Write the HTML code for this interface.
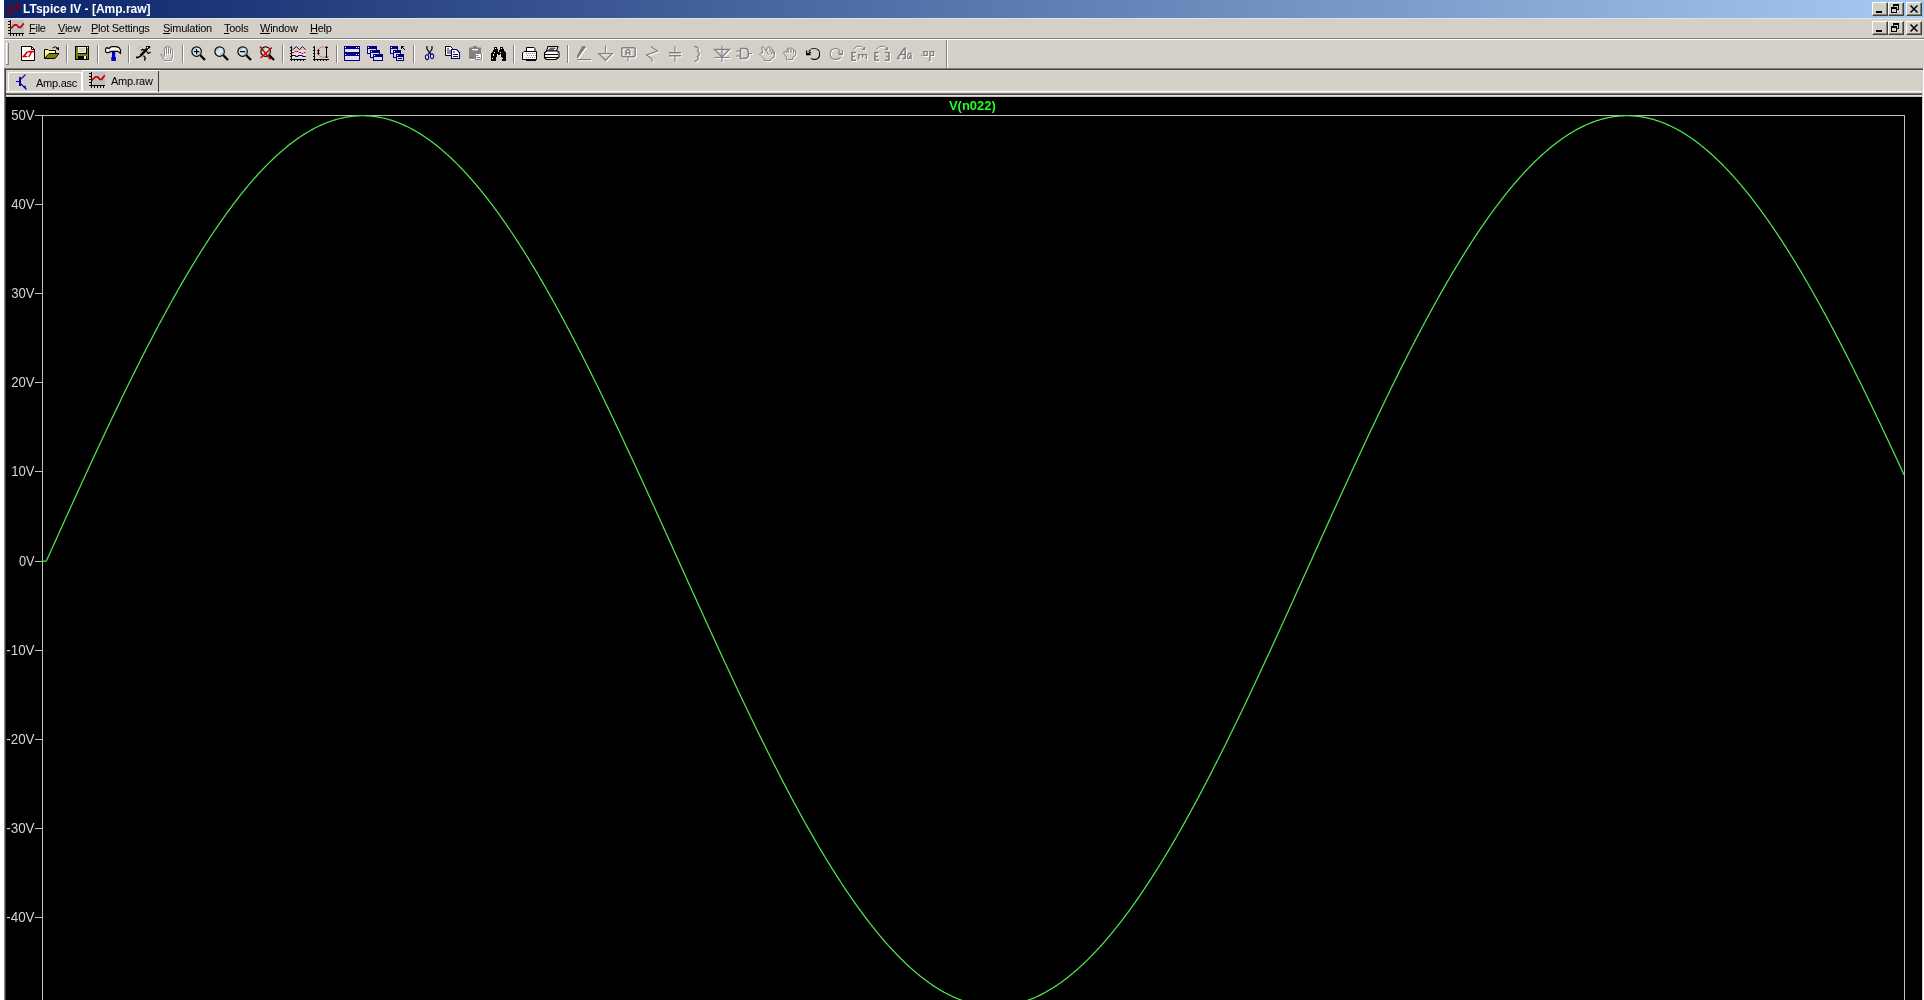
<!DOCTYPE html><html><head><meta charset="utf-8"><style>
*{margin:0;padding:0;box-sizing:border-box}
html,body{width:1924px;height:1000px;overflow:hidden;background:#fff;position:relative;font-family:"Liberation Sans",sans-serif}
.t,.tt{will-change:transform}
.a{position:absolute}
.t{position:absolute;font-size:11px;line-height:12px;color:#000;white-space:nowrap;letter-spacing:-0.25px}
.u{text-decoration:underline;text-underline-offset:1px}
svg{position:absolute;overflow:visible}
</style></head><body><div class="a" style="left:4px;top:0px;width:1920px;height:18px;background:linear-gradient(to right,#0a246a,#a6caf0);"></div><div class="a" style="left:4px;top:18px;width:1920px;height:20px;background:#d4d0c8;"></div><div class="a" style="left:4px;top:18px;width:1920px;height:1px;background:#e2e1e2;"></div><div class="a" style="left:4px;top:38px;width:1920px;height:1px;background:#808080;"></div><div class="a" style="left:4px;top:39px;width:1920px;height:1px;background:#ffffff;"></div><div class="a" style="left:4px;top:40px;width:1920px;height:28px;background:#d4d0c8;"></div><div class="a" style="left:946px;top:40px;width:1px;height:28px;background:#808080;"></div><div class="a" style="left:947px;top:40px;width:1px;height:28px;background:#ffffff;"></div><div class="a" style="left:4px;top:68px;width:1920px;height:932px;background:#d4d0c8;"></div><div class="a" style="left:4px;top:68px;width:1920px;height:1px;background:#808080;"></div><div class="a" style="left:4px;top:69px;width:1919px;height:1px;background:#404040;"></div><div class="a" style="left:4px;top:68px;width:1px;height:932px;background:#808080;"></div><div class="a" style="left:6px;top:70px;width:1916px;height:1px;background:#dedad4;"></div><div class="a" style="left:5px;top:69px;width:1px;height:931px;background:#404040;"></div><div class="a" style="left:1923px;top:68px;width:1px;height:932px;background:#ffffff;"></div><div class="a" style="left:6px;top:91px;width:1916px;height:1px;background:#ffffff;"></div><div class="a" style="left:6px;top:92px;width:1916px;height:1px;background:#d4d0c8;"></div><div class="a" style="left:6px;top:93px;width:1916px;height:1px;background:#808080;"></div><div class="a" style="left:6px;top:94px;width:1916px;height:1px;background:#404040;"></div><div class="a" style="left:6px;top:95px;width:1916px;height:1px;background:#e8e6e2;"></div><div class="a" style="left:6px;top:96px;width:1916px;height:1px;background:#c8c6c2;"></div><div class="a" style="left:6px;top:97px;width:1916px;height:903px;background:#000000;"></div><div class="a" style="will-change:transform;left:23px;top:2px;font-weight:bold;font-size:12px;line-height:14px;color:#fff;white-space:nowrap">LTspice IV - [Amp.raw]</div><div class="a" style="left:1872px;top:2px;width:16px;height:14px;background:#d4d0c8;border-top:1px solid #fff;border-left:1px solid #fff;border-right:1px solid #404040;border-bottom:1px solid #404040;box-shadow:inset -1px -1px 0 #808080"></div><div class="a" style="left:1876px;top:11px;width:6px;height:2px;background:#000;"></div><div class="a" style="left:1888px;top:2px;width:16px;height:14px;background:#d4d0c8;border-top:1px solid #fff;border-left:1px solid #fff;border-right:1px solid #404040;border-bottom:1px solid #404040;box-shadow:inset -1px -1px 0 #808080"></div><svg class="a" style="left:1888px;top:2px" width="16" height="14" shape-rendering="crispEdges"><path d="M5 2h6v6h-2v-1h1v-3h-4v1h-1z" fill="#000"/><path d="M3 5h6v6h-6z M4 7v3h4v-3z" fill="#000" fill-rule="evenodd"/></svg><div class="a" style="left:1906px;top:2px;width:16px;height:14px;background:#d4d0c8;border-top:1px solid #fff;border-left:1px solid #fff;border-right:1px solid #404040;border-bottom:1px solid #404040;box-shadow:inset -1px -1px 0 #808080"></div><svg class="a" style="left:1906px;top:2px" width="16" height="14"><path d="M4.5 3.5 L11.5 10.5 M11.5 3.5 L4.5 10.5" stroke="#000" stroke-width="1.5" fill="none"/></svg><div class="a" style="left:1872px;top:21px;width:16px;height:14px;background:#d4d0c8;border-top:1px solid #fff;border-left:1px solid #fff;border-right:1px solid #404040;border-bottom:1px solid #404040;box-shadow:inset -1px -1px 0 #808080"></div><div class="a" style="left:1876px;top:30px;width:6px;height:2px;background:#000;"></div><div class="a" style="left:1888px;top:21px;width:16px;height:14px;background:#d4d0c8;border-top:1px solid #fff;border-left:1px solid #fff;border-right:1px solid #404040;border-bottom:1px solid #404040;box-shadow:inset -1px -1px 0 #808080"></div><svg class="a" style="left:1888px;top:21px" width="16" height="14" shape-rendering="crispEdges"><path d="M5 2h6v6h-2v-1h1v-3h-4v1h-1z" fill="#000"/><path d="M3 5h6v6h-6z M4 7v3h4v-3z" fill="#000" fill-rule="evenodd"/></svg><div class="a" style="left:1906px;top:21px;width:16px;height:14px;background:#d4d0c8;border-top:1px solid #fff;border-left:1px solid #fff;border-right:1px solid #404040;border-bottom:1px solid #404040;box-shadow:inset -1px -1px 0 #808080"></div><svg class="a" style="left:1906px;top:21px" width="16" height="14"><path d="M4.5 3.5 L11.5 10.5 M11.5 3.5 L4.5 10.5" stroke="#000" stroke-width="1.5" fill="none"/></svg><div class="t" style="left:29px;top:22px"><span class="u">F</span>ile</div><div class="t" style="left:57.5px;top:22px"><span class="u">V</span>iew</div><div class="t" style="left:91px;top:22px"><span class="u">P</span>lot Settings</div><div class="t" style="left:163px;top:22px"><span class="u">S</span>imulation</div><div class="t" style="left:223.5px;top:22px"><span class="u">T</span>ools</div><div class="t" style="left:260px;top:22px"><span class="u">W</span>indow</div><div class="t" style="left:310px;top:22px"><span class="u">H</span>elp</div><div class="a" style="left:8px;top:72px;width:74px;height:19px;background:#d4d0c8;border-top:1px solid #fff;border-left:1px solid #fff;border-top-left-radius:2px"></div><div class="a" style="left:81px;top:73px;width:1px;height:18px;background:#ffffff;"></div><div class="t" style="left:36px;top:77px">Amp.asc</div><div class="a" style="left:82px;top:70px;width:78px;height:21px;background:#d4d0c8;border-top:1px solid #fff;border-left:1px solid #fff;border-top-left-radius:2px"></div><div class="a" style="left:158px;top:71px;width:1px;height:21px;background:#404040;"></div><div class="t" style="left:111px;top:75px">Amp.raw</div><div class="a" style="left:66px;top:45px;width:1px;height:18px;background:#808080;"></div><div class="a" style="left:67px;top:45px;width:1px;height:18px;background:#ffffff;"></div><div class="a" style="left:97px;top:45px;width:1px;height:18px;background:#808080;"></div><div class="a" style="left:98px;top:45px;width:1px;height:18px;background:#ffffff;"></div><div class="a" style="left:128px;top:45px;width:1px;height:18px;background:#808080;"></div><div class="a" style="left:129px;top:45px;width:1px;height:18px;background:#ffffff;"></div><div class="a" style="left:182px;top:45px;width:1px;height:18px;background:#808080;"></div><div class="a" style="left:183px;top:45px;width:1px;height:18px;background:#ffffff;"></div><div class="a" style="left:282px;top:45px;width:1px;height:18px;background:#808080;"></div><div class="a" style="left:283px;top:45px;width:1px;height:18px;background:#ffffff;"></div><div class="a" style="left:336px;top:45px;width:1px;height:18px;background:#808080;"></div><div class="a" style="left:337px;top:45px;width:1px;height:18px;background:#ffffff;"></div><div class="a" style="left:413px;top:45px;width:1px;height:18px;background:#808080;"></div><div class="a" style="left:414px;top:45px;width:1px;height:18px;background:#ffffff;"></div><div class="a" style="left:513px;top:45px;width:1px;height:18px;background:#808080;"></div><div class="a" style="left:514px;top:45px;width:1px;height:18px;background:#ffffff;"></div><div class="a" style="left:567px;top:45px;width:1px;height:18px;background:#808080;"></div><div class="a" style="left:568px;top:45px;width:1px;height:18px;background:#ffffff;"></div><div class="a" style="left:6px;top:43px;width:1px;height:21px;background:#ffffff;"></div><div class="a" style="left:6px;top:43px;width:2px;height:1px;background:#ffffff;"></div><div class="a" style="left:8px;top:43px;width:1px;height:22px;background:#808080;"></div><div class="a" style="left:6px;top:64px;width:3px;height:1px;background:#808080;"></div><svg style="left:8px;top:20px" width="17" height="17" viewBox="0 0 17 17"><rect x="4" y="0" width="12" height="13" fill="#c0c0c0"/><rect x="2" y="0" width="1" height="16" fill="#000"/><rect x="0" y="13" width="16" height="1" fill="#000"/><rect x="0" y="1" width="2" height="1" fill="#000"/><rect x="0" y="4" width="2" height="1" fill="#000"/><rect x="0" y="7" width="2" height="1" fill="#000"/><rect x="0" y="10" width="2" height="1" fill="#000"/><rect x="5" y="14" width="1" height="2" fill="#000"/><rect x="8" y="14" width="1" height="2" fill="#000"/><rect x="11" y="14" width="1" height="2" fill="#000"/><rect x="14" y="14" width="1" height="2" fill="#000"/><polyline points="2.6,8.6 6.4,4.8 8.6,4.8 10.8,7.4 12.6,7.4 15.8,3.4" fill="none" stroke="#d00000" stroke-width="1.7" stroke-linejoin="round"/></svg><svg style="left:89px;top:72px" width="17" height="17" viewBox="0 0 17 17"><rect x="4" y="0" width="12" height="13" fill="#c0c0c0"/><rect x="2" y="0" width="1" height="16" fill="#000"/><rect x="0" y="13" width="16" height="1" fill="#000"/><rect x="0" y="1" width="2" height="1" fill="#000"/><rect x="0" y="4" width="2" height="1" fill="#000"/><rect x="0" y="7" width="2" height="1" fill="#000"/><rect x="0" y="10" width="2" height="1" fill="#000"/><rect x="5" y="14" width="1" height="2" fill="#000"/><rect x="8" y="14" width="1" height="2" fill="#000"/><rect x="11" y="14" width="1" height="2" fill="#000"/><rect x="14" y="14" width="1" height="2" fill="#000"/><polyline points="2.6,8.6 6.4,4.8 8.6,4.8 10.8,7.4 12.6,7.4 15.8,3.4" fill="none" stroke="#d00000" stroke-width="1.7" stroke-linejoin="round"/></svg><svg style="left:15px;top:73px" width="18" height="18" viewBox="0 0 18 18"><rect x="4" y="4" width="2" height="9" fill="#0000b0"/><rect x="1" y="8" width="3" height="1" fill="#0000b0"/><path d="M6 6 L10.5 1.5" stroke="#0000b0" stroke-width="1.1"/><path d="M6 11 L11.5 16.5" stroke="#0000b0" stroke-width="1.1"/><path d="M8 13.5 L10.5 12.5 L11 15.5 Z" fill="#0000b0"/></svg><svg style="left:6px;top:3px" width="16" height="13" viewBox="0 0 16 13"><path d="M4.6 1.3 H6.8 L3.6 8.6 H8.2 L7.3 10.6 H0.4 Z" fill="#800000"/><path d="M9.2 1 H14.4 L13.6 3.4 H12.4 L10.6 8.6 H8.8 L10.5 3.4 H8.4 Z" fill="#800000"/></svg><svg style="left:21px;top:46px" width="16" height="16" viewBox="0 0 16 16"><path d="M0.5 0.5 H10.5 L13.5 3.5 V14.5 H0.5 Z" fill="#fff" stroke="#000"/><path d="M10.5 0.5 V3.5 H13.5" fill="none" stroke="#000"/><path d="M5.6 5.4 H7.6 L4.2 10 H6.6 L5.8 11.3 H0.7 Z" fill="#e00000"/><path d="M7.4 4.8 H13.3 L12.6 6.5 H11 L8.6 11 H7 L9.3 6.5 H6.6 Z" fill="#e00000"/></svg><svg style="left:44px;top:46px" width="16" height="16" viewBox="0 0 16 16"><path d="M0.5 12.5 V3.5 H4 L5 4.5 H11.5 V7.5" fill="#f8f8a0" stroke="#000"/><path d="M0.5 12.5 L5 7.5 H15 L11 12.5 Z" fill="#808000" stroke="#000" stroke-linejoin="round"/><path d="M8.5 2 Q11 -0.5 13.2 1.8" fill="none" stroke="#000"/><path d="M11.8 2.6 L15 1 L15 4.5 Z" fill="#000"/></svg><svg style="left:75px;top:46px" width="15" height="15" viewBox="0 0 15 15" shape-rendering="crispEdges"><rect x="0" y="0" width="14" height="14" fill="#000"/><rect x="1" y="1" width="2" height="12" fill="#808000"/><rect x="12" y="2" width="1" height="11" fill="#808000"/><rect x="1" y="8" width="12" height="1.5" fill="#808000"/><rect x="3" y="1" width="8" height="6" fill="#f0eee8"/><rect x="4" y="2" width="6" height="4" fill="#d4d0c8"/><rect x="9" y="10" width="2" height="3" fill="#fff"/><rect x="12" y="1" width="1" height="1" fill="#fff"/></svg><svg style="left:105px;top:46px" width="17" height="16" viewBox="0 0 17 16"><path d="M0.6 3.6 Q0.6 1.8 2 1.6 L4 2.6 L5.6 1 L7 0.6 H11 L14 1.6 L15.5 4 V7.6 L14 5.8 L11 5.2 L5.6 5.6 L3 6.6 H1.6 L0.6 5.6 Z" fill="#fff" stroke="#000" stroke-width="1.2" stroke-linejoin="round"/><path d="M4 5 L5.6 4.2 H11.5 L14.5 5.2" fill="none" stroke="#b8b8b8" stroke-width="1"/><rect x="7" y="6" width="3.2" height="5.2" fill="#0000c8"/><rect x="6.3" y="11" width="4.6" height="4" fill="#0000c8"/></svg><svg style="left:136px;top:46px" width="16" height="16" viewBox="0 0 16 16"><path d="M10 0 H14.2 V1.6 L13 2.8 H10.6 Z" fill="#000"/><rect x="11" y="1" width="1.1" height="1.1" fill="#fff"/><path d="M11.2 2.6 L4.6 9.6" stroke="#000" stroke-width="2.4"/><path d="M10.4 5.4 L12.4 7.4 L14.6 6" fill="none" stroke="#000" stroke-width="1.2"/><path d="M8.6 4 L6.4 3.4 L5 4.6" fill="none" stroke="#000" stroke-width="1.3"/><path d="M5 9.6 L2.6 11.2 H0.8 V12.4" fill="none" stroke="#000" stroke-width="1.4"/><path d="M7.4 9.6 L9.2 11.6 L8.6 14.6" fill="none" stroke="#000" stroke-width="1.4"/><path d="M1 2.6 L3.4 3.6 M2.4 0.6 L4.8 1.6" stroke="#a8a8a8" stroke-width="0.8"/></svg><svg style="left:160px;top:46px" width="16" height="17" viewBox="0 0 16 17"><g transform="translate(1,1)" fill="#fff" stroke="#fff"><path d="M4.5 14.5 L0.8 9 Q0.5 8 1.8 8.3 L4.5 11 V2.5 Q4.5 1.2 5.5 1.2 Q6.5 1.2 6.5 2.5 V1 Q6.5 0.2 7.5 0.2 Q8.5 0.2 8.5 1.2 V1.8 Q8.5 1 9.5 1 Q10.5 1 10.5 2.5 V4 Q10.5 3 11.5 3 Q12.5 3 12.5 4.5 V11 L11 14.5 Z" fill="none" stroke-width="0.9"/><path d="M6.5 2 V8 M8.5 1.5 V8 M10.5 3 V8" fill="none" stroke-width="0.9"/></g><g fill="#808080" stroke="#808080"><path d="M4.5 14.5 L0.8 9 Q0.5 8 1.8 8.3 L4.5 11 V2.5 Q4.5 1.2 5.5 1.2 Q6.5 1.2 6.5 2.5 V1 Q6.5 0.2 7.5 0.2 Q8.5 0.2 8.5 1.2 V1.8 Q8.5 1 9.5 1 Q10.5 1 10.5 2.5 V4 Q10.5 3 11.5 3 Q12.5 3 12.5 4.5 V11 L11 14.5 Z" fill="none" stroke-width="0.9"/><path d="M6.5 2 V8 M8.5 1.5 V8 M10.5 3 V8" fill="none" stroke-width="0.9"/></g></svg><svg style="left:191px;top:46px" width="16" height="16" viewBox="0 0 16 16"><circle cx="5.6" cy="5.6" r="4.7" fill="#dde4e2" stroke="#000" stroke-width="1.2"/><path d="M2.6 4.6 Q3.2 2.8 5 2.2 M6.2 9.2 Q8.6 8.4 9.2 6.4" stroke="#60d0d0" stroke-width="1.4" fill="none"/><path d="M9.3 9.3 L14 14" stroke="#000" stroke-width="2.3"/><path d="M3 5.6 H8.2 M5.6 3 V8.2" stroke="#000" stroke-width="1.2"/></svg><svg style="left:214px;top:46px" width="16" height="16" viewBox="0 0 16 16"><circle cx="5.6" cy="5.6" r="4.7" fill="#dde4e2" stroke="#000" stroke-width="1.2"/><path d="M2.6 4.6 Q3.2 2.8 5 2.2 M6.2 9.2 Q8.6 8.4 9.2 6.4" stroke="#60d0d0" stroke-width="1.4" fill="none"/><path d="M9.3 9.3 L14 14" stroke="#000" stroke-width="2.3"/></svg><svg style="left:237px;top:46px" width="16" height="16" viewBox="0 0 16 16"><circle cx="5.6" cy="5.6" r="4.7" fill="#dde4e2" stroke="#000" stroke-width="1.2"/><path d="M2.6 4.6 Q3.2 2.8 5 2.2 M6.2 9.2 Q8.6 8.4 9.2 6.4" stroke="#60d0d0" stroke-width="1.4" fill="none"/><path d="M9.3 9.3 L14 14" stroke="#000" stroke-width="2.3"/><path d="M3 5.6 H8.2" stroke="#000" stroke-width="1.2"/></svg><svg style="left:260px;top:46px" width="16" height="16" viewBox="0 0 16 16"><circle cx="5.6" cy="5.6" r="4.7" fill="#dde4e2" stroke="#000" stroke-width="1.2"/><path d="M2.6 4.6 Q3.2 2.8 5 2.2 M6.2 9.2 Q8.6 8.4 9.2 6.4" stroke="#60d0d0" stroke-width="1.4" fill="none"/><path d="M9.3 9.3 L14 14" stroke="#000" stroke-width="2.3"/><path d="M0 0.5 L10.5 13.5 M12 1.5 L0.5 12" stroke="#e00000" stroke-width="1.6"/></svg><svg style="left:290px;top:46px" width="17" height="16" viewBox="0 0 17 16"><rect x="2" y="4.5" width="14" height="3" fill="#f8d8d8"/><rect x="2" y="8" width="14" height="4" fill="#e4e0f0"/><rect x="1" y="0" width="1" height="15" fill="#000"/><rect x="0" y="13" width="16" height="1" fill="#000"/><rect x="0" y="1" width="1" height="1" fill="#000"/><rect x="0" y="4" width="1" height="1" fill="#000"/><rect x="0" y="7" width="1" height="1" fill="#000"/><rect x="0" y="10" width="1" height="1" fill="#000"/><rect x="1" y="14" width="1" height="1" fill="#000"/><rect x="4" y="14" width="1" height="1" fill="#000"/><rect x="7" y="14" width="1" height="1" fill="#000"/><rect x="10" y="14" width="1" height="1" fill="#000"/><rect x="13" y="14" width="1" height="1" fill="#000"/><polyline points="2.5,3.8 6.5,0.6 9.5,3.8 12.5,0.6 15.7,3.8" fill="none" stroke="#000060" stroke-width="0.9"/><polyline points="2,6.5 4,6.5 5,5.5 8,5.5 9,6.5 11,6.5 12,7.5 13,7.5 14,6.5 15.7,6.5" fill="none" stroke="#c00000" stroke-width="0.9"/><polyline points="2,9.5 5,9.5 6,10.5 7.5,10.5 8.5,9.5 12,9.5 13,10.5 15.7,10.5" fill="none" stroke="#000060" stroke-width="1.1"/></svg><svg style="left:313px;top:46px" width="17" height="16" viewBox="0 0 17 16"><rect x="1" y="0" width="1" height="15" fill="#000"/><rect x="0" y="13" width="16" height="1" fill="#000"/><rect x="0" y="1" width="1" height="1" fill="#000"/><rect x="0" y="4" width="1" height="1" fill="#000"/><rect x="0" y="7" width="1" height="1" fill="#000"/><rect x="0" y="10" width="1" height="1" fill="#000"/><rect x="1" y="14" width="1" height="1" fill="#000"/><rect x="4" y="14" width="1" height="1" fill="#000"/><rect x="7" y="14" width="1" height="1" fill="#000"/><rect x="10" y="14" width="1" height="1" fill="#000"/><rect x="13" y="14" width="1" height="1" fill="#000"/><path d="M11 0.6 Q4.5 1.5 4.5 6 Q4.5 10.5 11 11.6" fill="none" stroke="#e06060" stroke-width="0.9"/><path d="M5.5 3.8 V8.5 M4.5 4.8 L5.5 3.8 L6.5 4.8 M4.5 7.5 L5.5 8.5 L6.5 7.5" fill="none" stroke="#000" stroke-width="1"/><path d="M13.5 0.5 V12 M12 2 L13.5 0.5 L15 2 M12 10.5 L13.5 12 L15 10.5" fill="none" stroke="#000" stroke-width="1"/></svg><svg style="left:344px;top:46px" width="17" height="16" viewBox="0 0 17 16" shape-rendering="crispEdges"><rect x="0" y="0" width="16" height="15" fill="#000080"/><rect x="1" y="3" width="14" height="3" fill="#e0e0f4"/><rect x="1" y="10" width="14" height="4" fill="#e0e0f4"/><rect x="1" y="1" width="1" height="1" fill="#fff"/><rect x="12" y="1" width="1" height="1" fill="#fff"/><rect x="14" y="1" width="1" height="1" fill="#fff"/><rect x="1" y="8" width="1" height="1" fill="#fff"/><rect x="12" y="8" width="1" height="1" fill="#fff"/><rect x="14" y="8" width="1" height="1" fill="#fff"/></svg><svg style="left:367px;top:46px" width="17" height="16" viewBox="0 0 17 16" shape-rendering="crispEdges"><rect x="0" y="0" width="10" height="8" fill="#000080"/><rect x="1" y="3" width="8" height="4" fill="#e0e0f4"/><rect x="1" y="1" width="1" height="1" fill="#fff"/><rect x="3" y="4" width="10" height="8" fill="#000080"/><rect x="4" y="7" width="8" height="4" fill="#e0e0f4"/><rect x="4" y="5" width="1" height="1" fill="#fff"/><rect x="6" y="8" width="10" height="7" fill="#000080"/><rect x="7" y="11" width="8" height="3" fill="#e0e0f4"/><rect x="7" y="9" width="1" height="1" fill="#fff"/></svg><svg style="left:390px;top:46px" width="17" height="16" viewBox="0 0 17 16" shape-rendering="crispEdges"><rect x="0" y="0" width="8" height="8" fill="#000080"/><rect x="1" y="3" width="6" height="4" fill="#e0e0f4"/><rect x="1" y="1" width="1" height="1" fill="#fff"/><rect x="3" y="4" width="8" height="8" fill="#000080"/><rect x="4" y="7" width="6" height="4" fill="#e0e0f4"/><rect x="4" y="5" width="1" height="1" fill="#fff"/><rect x="6" y="8" width="8" height="7" fill="#000080"/><rect x="7" y="11" width="6" height="3" fill="#e0e0f4"/><rect x="7" y="9" width="1" height="1" fill="#fff"/><rect x="8" y="12" width="4" height="1" fill="#000"/><path d="M11.5 0.5 H14 M11.5 0.5 V3 M11.5 0.5 L15 4" stroke="#000" stroke-width="1.2" fill="none"/></svg><svg style="left:425px;top:46px" width="10" height="15" viewBox="0 0 10 15"><path d="M2 0 V3 L5 7.5 M7 0 V3 L4 7.5" fill="none" stroke="#000" stroke-width="1.2"/><ellipse cx="2" cy="11.2" rx="1.6" ry="2.4" fill="#e0e0ff" stroke="#000080" stroke-width="1.1"/><ellipse cx="7" cy="10.3" rx="1.6" ry="2.4" fill="#e0e0ff" stroke="#000080" stroke-width="1.1"/><path d="M4 7 L3 9 M5 7 L6 8" stroke="#000080" stroke-width="1.1"/></svg><svg style="left:445px;top:46px" width="16" height="14" viewBox="0 0 16 14"><path d="M0.5 0.5 H5.5 L7.5 2.5 V9.5 H0.5 Z" fill="#fff" stroke="#000"/><path d="M2 3 H4 M2 5 H6 M2 7 H6" stroke="#000" stroke-width="0.9"/><path d="M6.5 3.5 H11.5 L14.5 6.5 V12.5 H6.5 Z" fill="#fff" stroke="#000080" stroke-width="1.1"/><path d="M8 6 H10 M8 8.5 H13 M8 10.5 H13" stroke="#000" stroke-width="0.9"/></svg><svg style="left:468px;top:46px" width="16" height="16" viewBox="0 0 16 16"><path d="M1 1.5 H13 V13 H1 Z" fill="#808080"/><rect x="5" y="0" width="4" height="2" fill="#808080"/><rect x="4" y="3" width="6" height="1.3" fill="#fff"/><rect x="7" y="7" width="7" height="7" fill="#fff"/><path d="M7.5 7.5 H13.5 V13.5 H7.5 Z" fill="none" stroke="#808080"/><path d="M8.5 9.5 H10.5 M8.5 11.5 H12.5" stroke="#808080"/><path d="M2 13.5 H7 M14.5 7 V14.5" stroke="#fff"/></svg><svg style="left:491px;top:47px" width="16" height="15" viewBox="0 0 16 15" shape-rendering="crispEdges"><path d="M3 0 H6 V2 L7 3 V4.5 H8 V3 L9 2 V0 H12 V2 L13 3 V4 L15 6 V14 H10.5 V9.5 H9.5 V8 H5.5 V9.5 H4.5 V14 H0 V6 L2 4 V3 L3 2 Z" fill="#000"/><rect x="4" y="1" width="1" height="1" fill="#fff"/><rect x="10" y="1" width="1" height="1" fill="#fff"/><rect x="3" y="4.5" width="1" height="1" fill="#fff"/><rect x="9" y="4.5" width="1" height="1" fill="#fff"/><rect x="2" y="6.5" width="1" height="2" fill="#fff"/><rect x="6" y="6.5" width="1" height="1.5" fill="#fff"/><rect x="9" y="6.5" width="1" height="2" fill="#fff"/><rect x="1" y="10.5" width="1" height="1.5" fill="#fff"/><rect x="11" y="10.5" width="1" height="1.5" fill="#fff"/></svg><svg style="left:522px;top:47px" width="16" height="15" viewBox="0 0 16 15"><path d="M4.5 0.5 H12 L13 1.5 V4.5 H4.5 Z" fill="#fff" stroke="#000"/><path d="M0.5 6 L2 4.5 H14.5 V12.5 H0.5 Z" fill="#fff" stroke="#000"/><rect x="4" y="12.5" width="10" height="1.5" fill="#000"/><rect x="4" y="6" width="1" height="1" fill="#909090"/><rect x="6" y="6" width="1" height="1" fill="#909090"/><rect x="8" y="6" width="1" height="1" fill="#909090"/><rect x="10" y="6" width="1" height="1" fill="#909090"/><rect x="12" y="6" width="1" height="1" fill="#909090"/><rect x="5" y="8" width="1" height="1" fill="#909090"/><rect x="7" y="8" width="1" height="1" fill="#909090"/><rect x="9" y="8" width="1" height="1" fill="#909090"/><rect x="11" y="8" width="1" height="1" fill="#909090"/><rect x="13" y="8" width="1" height="1" fill="#909090"/><rect x="4" y="10" width="1" height="1" fill="#909090"/><rect x="6" y="10" width="1" height="1" fill="#909090"/><rect x="8" y="10" width="1" height="1" fill="#909090"/><rect x="10" y="10" width="1" height="1" fill="#909090"/><rect x="12" y="10" width="1" height="1" fill="#909090"/></svg><svg style="left:544px;top:46px" width="16" height="15" viewBox="0 0 16 15"><path d="M4 0.5 H14 L12.5 5 H2.5 Z" fill="#fff" stroke="#000" stroke-width="1.1"/><path d="M5.5 2.2 H11.5 M4.5 3.8 H10" stroke="#000" stroke-width="0.9"/><path d="M2.5 5 L0.5 7 V12 L2.5 13.5 H12 L15 11 V6 L13 5 Z" fill="#fff" stroke="#000" stroke-width="1.1"/><rect x="1" y="8" width="13" height="1" fill="#000"/><rect x="2" y="9.5" width="10" height="1.3" fill="#f0f0c0"/><rect x="1" y="11" width="13" height="1" fill="#000"/><path d="M13 6 L14.5 8 M13.5 10 L14.5 11" stroke="#888" stroke-width="0.8"/></svg><svg style="left:577px;top:46px" width="16" height="16" viewBox="0 0 16 16"><g transform="translate(1,1)" fill="#fff" stroke="#fff"><path d="M5.2 0 H8.2 L8.6 1.4 L1.6 11.2 L0 12.6 V9.4 Z" stroke="none"/><path d="M0 13.6 H14" fill="none" stroke-width="1.2"/></g><g fill="#808080" stroke="#808080"><path d="M5.2 0 H8.2 L8.6 1.4 L1.6 11.2 L0 12.6 V9.4 Z" stroke="none"/><path d="M0 13.6 H14" fill="none" stroke-width="1.2"/></g></svg><svg style="left:598px;top:46px" width="17" height="17" viewBox="0 0 17 17"><g transform="translate(1,1)" fill="#fff" stroke="#fff"><path d="M7.5 0 V7" fill="none" stroke-width="1.1"/><path d="M0.8 7.6 H14.2 L7.5 14.3 Z" fill="none" stroke-width="1.3"/></g><g fill="#808080" stroke="#808080"><path d="M7.5 0 V7" fill="none" stroke-width="1.1"/><path d="M0.8 7.6 H14.2 L7.5 14.3 Z" fill="none" stroke-width="1.3"/></g></svg><svg style="left:621px;top:47px" width="16" height="16" viewBox="0 0 16 16"><g transform="translate(1,1)" fill="#fff" stroke="#fff"><rect x="0.8" y="0.8" width="13.4" height="9" rx="1.5" fill="none" stroke-width="1.5"/><path d="M7 10 V14.5" fill="none" stroke-width="1"/><path d="M5.2 8.2 V4 L6.5 2.4 H7.5 L8.8 4 V8.2 M5.2 5.8 H8.8" fill="none" stroke-width="1.4"/></g><g fill="#808080" stroke="#808080"><rect x="0.8" y="0.8" width="13.4" height="9" rx="1.5" fill="none" stroke-width="1.5"/><path d="M7 10 V14.5" fill="none" stroke-width="1"/><path d="M5.2 8.2 V4 L6.5 2.4 H7.5 L8.8 4 V8.2 M5.2 5.8 H8.8" fill="none" stroke-width="1.4"/></g></svg><svg style="left:646px;top:46px" width="14" height="17" viewBox="0 0 14 17"><g transform="translate(1,1)" fill="#fff" stroke="#fff"><path d="M6 0 V1.5 L11.5 5 L0.5 9 L6 13 V16" fill="none" stroke-width="1.2"/></g><g fill="#808080" stroke="#808080"><path d="M6 0 V1.5 L11.5 5 L0.5 9 L6 13 V16" fill="none" stroke-width="1.2"/></g></svg><svg style="left:669px;top:46px" width="14" height="17" viewBox="0 0 14 17"><g transform="translate(1,1)" fill="#fff" stroke="#fff"><path d="M6 0 V6 M6 10 V16" fill="none" stroke-width="1.1"/><path d="M0 6.8 H12 M0 9.8 H12" fill="none" stroke-width="1.6"/></g><g fill="#808080" stroke="#808080"><path d="M6 0 V6 M6 10 V16" fill="none" stroke-width="1.1"/><path d="M0 6.8 H12 M0 9.8 H12" fill="none" stroke-width="1.6"/></g></svg><svg style="left:694px;top:46px" width="9" height="17" viewBox="0 0 9 17"><g transform="translate(1,1)" fill="#fff" stroke="#fff"><path d="M0.5 0.5 Q6 1.5 3.5 5 Q7 8 3.5 10.5 Q6 14 0.5 15.5" fill="none" stroke-width="1.3"/></g><g fill="#808080" stroke="#808080"><path d="M0.5 0.5 Q6 1.5 3.5 5 Q7 8 3.5 10.5 Q6 14 0.5 15.5" fill="none" stroke-width="1.3"/></g></svg><svg style="left:714px;top:46px" width="17" height="17" viewBox="0 0 17 17"><g transform="translate(1,1)" fill="#fff" stroke="#fff"><path d="M8 0 V16" fill="none" stroke-width="1.1"/><path d="M0.5 3.5 H15.5 L8 11 Z" fill="none" stroke-width="1.3"/><path d="M0.5 11.5 H15.5" fill="none" stroke-width="1.1"/></g><g fill="#808080" stroke="#808080"><path d="M8 0 V16" fill="none" stroke-width="1.1"/><path d="M0.5 3.5 H15.5 L8 11 Z" fill="none" stroke-width="1.3"/><path d="M0.5 11.5 H15.5" fill="none" stroke-width="1.1"/></g></svg><svg style="left:736px;top:46px" width="17" height="17" viewBox="0 0 17 17"><g transform="translate(1,1)" fill="#fff" stroke="#fff"><path d="M4.5 2.5 H9 Q12.5 2.5 12.5 7.5 Q12.5 12.5 9 12.5 H4.5 Z" fill="none" stroke-width="1.6"/><path d="M0 5 H4 M0 10 H4 M12.5 7.5 H16" fill="none" stroke-width="1.1"/></g><g fill="#808080" stroke="#808080"><path d="M4.5 2.5 H9 Q12.5 2.5 12.5 7.5 Q12.5 12.5 9 12.5 H4.5 Z" fill="none" stroke-width="1.6"/><path d="M0 5 H4 M0 10 H4 M12.5 7.5 H16" fill="none" stroke-width="1.1"/></g></svg><svg style="left:759px;top:46px" width="17" height="17" viewBox="0 0 17 17"><g transform="translate(1,1)" fill="#fff" stroke="#fff"><path d="M0.5 8 L2 6.6 L4 7 L2.6 2 Q3 0.5 4.2 0.6 L5.6 1.8 L7 5 L8.6 1.4 Q9.6 0.4 10.6 0.6 L12.6 2.6 L14.6 4.6 L15.6 7 L15.2 11 L11.6 13.4 V14.6 H5.6 V13.2 Z" fill="none" stroke-width="1"/><path d="M7.4 4.6 L9.8 8.8 M10.4 1.6 L13 8 M13.2 3.4 L14.6 8" fill="none" stroke-width="1"/></g><g fill="#808080" stroke="#808080"><path d="M0.5 8 L2 6.6 L4 7 L2.6 2 Q3 0.5 4.2 0.6 L5.6 1.8 L7 5 L8.6 1.4 Q9.6 0.4 10.6 0.6 L12.6 2.6 L14.6 4.6 L15.6 7 L15.2 11 L11.6 13.4 V14.6 H5.6 V13.2 Z" fill="none" stroke-width="1"/><path d="M7.4 4.6 L9.8 8.8 M10.4 1.6 L13 8 M13.2 3.4 L14.6 8" fill="none" stroke-width="1"/></g></svg><svg style="left:783px;top:46px" width="16" height="17" viewBox="0 0 16 17"><g transform="translate(1,1)" fill="#fff" stroke="#fff"><path d="M0.4 6.6 L2.6 5.4 L3.6 6.4 L4.6 2.6 Q5 1.8 6 2 L7 2.4 Q7.6 1.8 8.6 2 L9.6 3 Q10.6 3 11.6 4 L12.8 6 V9 L9.6 11.6 V13.6 H3.4 V10.8 Z" fill="none" stroke-width="1"/><path d="M5.2 3 V7 M8 3 V7 M10.6 4 V7.6" fill="none" stroke-width="1"/></g><g fill="#808080" stroke="#808080"><path d="M0.4 6.6 L2.6 5.4 L3.6 6.4 L4.6 2.6 Q5 1.8 6 2 L7 2.4 Q7.6 1.8 8.6 2 L9.6 3 Q10.6 3 11.6 4 L12.8 6 V9 L9.6 11.6 V13.6 H3.4 V10.8 Z" fill="none" stroke-width="1"/><path d="M5.2 3 V7 M8 3 V7 M10.6 4 V7.6" fill="none" stroke-width="1"/></g></svg><svg style="left:829px;top:48px" width="17" height="15" viewBox="0 0 17 15"><g transform="translate(1,1)" fill="#fff" stroke="#fff"><path d="M11.2 3.8 Q9.5 0.5 7 0.5 Q1.2 0.6 1.2 6 Q1.2 11.4 7 11.4 Q10.5 11.4 12 9" fill="none" stroke-width="1.1"/><path d="M13.4 2.5 V6.6 H9.6 M13.2 6.4 L9 4.5" fill="none" stroke-width="1.1"/></g><g fill="#808080" stroke="#808080"><path d="M11.2 3.8 Q9.5 0.5 7 0.5 Q1.2 0.6 1.2 6 Q1.2 11.4 7 11.4 Q10.5 11.4 12 9" fill="none" stroke-width="1.1"/><path d="M13.4 2.5 V6.6 H9.6 M13.2 6.4 L9 4.5" fill="none" stroke-width="1.1"/></g></svg><svg style="left:851px;top:46px" width="17" height="17" viewBox="0 0 17 17"><g transform="translate(1,1)" fill="#fff" stroke="#fff"><path d="M2.2 3.6 L5.6 0.4 H10.6 L13.2 3" fill="none" stroke-width="0.9"/><path d="M11 3.4 L13.8 3.6 L13.6 1" fill="none" stroke-width="1.1"/><path d="M1 6 V14.8 M1 6.5 H4.8 M1 10.5 H4 M1 14.2 H5" fill="none" stroke-width="1.6"/><path d="M7.2 8.6 H15.8 M7.8 8.6 V13 M11.6 8.6 V11.8 M15.4 8.6 V13" fill="none" stroke-width="1.4"/></g><g fill="#808080" stroke="#808080"><path d="M2.2 3.6 L5.6 0.4 H10.6 L13.2 3" fill="none" stroke-width="0.9"/><path d="M11 3.4 L13.8 3.6 L13.6 1" fill="none" stroke-width="1.1"/><path d="M1 6 V14.8 M1 6.5 H4.8 M1 10.5 H4 M1 14.2 H5" fill="none" stroke-width="1.6"/><path d="M7.2 8.6 H15.8 M7.8 8.6 V13 M11.6 8.6 V11.8 M15.4 8.6 V13" fill="none" stroke-width="1.4"/></g></svg><svg style="left:874px;top:46px" width="17" height="17" viewBox="0 0 17 17"><g transform="translate(1,1)" fill="#fff" stroke="#fff"><path d="M2.2 3.6 L5.6 0.4 H10.6 L13.2 3" fill="none" stroke-width="0.9"/><path d="M11 3.4 L13.8 3.6 L13.6 1" fill="none" stroke-width="1.1"/><path d="M1 6 V14.8 M1 6.5 H4.8 M1 10.5 H4 M1 14.2 H5" fill="none" stroke-width="1.6"/><path d="M15 6 V14.8 M15 6.5 H11.2 M15 10.5 H12 M15 14.2 H11" fill="none" stroke-width="1.6"/></g><g fill="#808080" stroke="#808080"><path d="M2.2 3.6 L5.6 0.4 H10.6 L13.2 3" fill="none" stroke-width="0.9"/><path d="M11 3.4 L13.8 3.6 L13.6 1" fill="none" stroke-width="1.1"/><path d="M1 6 V14.8 M1 6.5 H4.8 M1 10.5 H4 M1 14.2 H5" fill="none" stroke-width="1.6"/><path d="M15 6 V14.8 M15 6.5 H11.2 M15 10.5 H12 M15 14.2 H11" fill="none" stroke-width="1.6"/></g></svg><svg style="left:897px;top:48px" width="17" height="15" viewBox="0 0 17 15"><g transform="translate(1,1)" fill="#fff" stroke="#fff"><path d="M0.2 10.6 L7.4 0.2 H8.2 V10.6 M3.2 6.6 H7.6 M0 10.6 H3 M6 10.6 H8.8" fill="none" stroke-width="1.5"/><path d="M14.6 5.6 Q11 4.6 10.4 8.4 Q10.2 10.8 12 10.6 L14 6.6 V10.6 H15.2" fill="none" stroke-width="1.3"/></g><g fill="#808080" stroke="#808080"><path d="M0.2 10.6 L7.4 0.2 H8.2 V10.6 M3.2 6.6 H7.6 M0 10.6 H3 M6 10.6 H8.8" fill="none" stroke-width="1.5"/><path d="M14.6 5.6 Q11 4.6 10.4 8.4 Q10.2 10.8 12 10.6 L14 6.6 V10.6 H15.2" fill="none" stroke-width="1.3"/></g></svg><svg style="left:921px;top:49px" width="15" height="14" viewBox="0 0 15 14"><g transform="translate(1,1)" fill="#fff" stroke="#fff"><rect x="0" y="6" width="1" height="1" stroke="none"/><path d="M2.8 2.6 H6.2 V6.4 H2.8 Z" fill="none" stroke-width="1.3"/><path d="M9 2 V11.4 L7.6 12 M9 2.6 H12.6 V6.4 H9" fill="none" stroke-width="1.3"/></g><g fill="#808080" stroke="#808080"><rect x="0" y="6" width="1" height="1" stroke="none"/><path d="M2.8 2.6 H6.2 V6.4 H2.8 Z" fill="none" stroke-width="1.3"/><path d="M9 2 V11.4 L7.6 12 M9 2.6 H12.6 V6.4 H9" fill="none" stroke-width="1.3"/></g></svg><svg style="left:806px;top:48px" width="16" height="14" viewBox="0 0 16 14"><path d="M2.8 3.8 Q4.6 0.5 7.8 0.5 Q13.6 0.6 13.6 6 Q13.6 11.4 7.8 11.4 Q6 11.4 5 10.4" fill="none" stroke="#000" stroke-width="1.1"/><path d="M4.5 1.8 Q8 0.2 11.5 2.5 Q12.8 4 12.6 5" fill="none" stroke="#d8d098" stroke-width="0.9"/><path d="M0.6 2.4 V6.6 H4.6 M0.8 6.4 L5 4.4" fill="none" stroke="#000" stroke-width="1.2"/></svg><svg class="a" style="left:0;top:0;will-change:transform" width="1924" height="1000"><path d="M42.5 1000 V115.5 H1904.5 V1000" fill="none" stroke="#c0c0c0" stroke-width="1" shape-rendering="crispEdges"/><path d="M35 115.5 H42" stroke="#c0c0c0" stroke-width="1" shape-rendering="crispEdges"/><text x="11.2" y="120" textLength="23.4" lengthAdjust="spacingAndGlyphs" font-family="Liberation Sans" font-size="14" fill="#d4d4d4">50V</text><path d="M35 204.5 H42" stroke="#c0c0c0" stroke-width="1" shape-rendering="crispEdges"/><text x="11.2" y="209" textLength="23.4" lengthAdjust="spacingAndGlyphs" font-family="Liberation Sans" font-size="14" fill="#d4d4d4">40V</text><path d="M35 293.5 H42" stroke="#c0c0c0" stroke-width="1" shape-rendering="crispEdges"/><text x="11.2" y="298" textLength="23.4" lengthAdjust="spacingAndGlyphs" font-family="Liberation Sans" font-size="14" fill="#d4d4d4">30V</text><path d="M35 382.5 H42" stroke="#c0c0c0" stroke-width="1" shape-rendering="crispEdges"/><text x="11.2" y="387" textLength="23.4" lengthAdjust="spacingAndGlyphs" font-family="Liberation Sans" font-size="14" fill="#d4d4d4">20V</text><path d="M35 471.5 H42" stroke="#c0c0c0" stroke-width="1" shape-rendering="crispEdges"/><text x="11.2" y="476" textLength="23.4" lengthAdjust="spacingAndGlyphs" font-family="Liberation Sans" font-size="14" fill="#d4d4d4">10V</text><path d="M35 561.5 H42" stroke="#c0c0c0" stroke-width="1" shape-rendering="crispEdges"/><text x="18.9" y="566" textLength="15.7" lengthAdjust="spacingAndGlyphs" font-family="Liberation Sans" font-size="14" fill="#d4d4d4">0V</text><path d="M35 650.5 H42" stroke="#c0c0c0" stroke-width="1" shape-rendering="crispEdges"/><text x="6.2" y="655" textLength="28.4" lengthAdjust="spacingAndGlyphs" font-family="Liberation Sans" font-size="14" fill="#d4d4d4">-10V</text><path d="M35 739.5 H42" stroke="#c0c0c0" stroke-width="1" shape-rendering="crispEdges"/><text x="6.2" y="744" textLength="28.4" lengthAdjust="spacingAndGlyphs" font-family="Liberation Sans" font-size="14" fill="#d4d4d4">-20V</text><path d="M35 828.5 H42" stroke="#c0c0c0" stroke-width="1" shape-rendering="crispEdges"/><text x="6.2" y="833" textLength="28.4" lengthAdjust="spacingAndGlyphs" font-family="Liberation Sans" font-size="14" fill="#d4d4d4">-30V</text><path d="M35 917.5 H42" stroke="#c0c0c0" stroke-width="1" shape-rendering="crispEdges"/><text x="6.2" y="922" textLength="28.4" lengthAdjust="spacingAndGlyphs" font-family="Liberation Sans" font-size="14" fill="#d4d4d4">-40V</text><text x="972.4" y="109.6" text-anchor="middle" font-family="Liberation Sans" font-weight="bold" font-size="13" fill="#22ff22">V(n022)</text><polyline points="42.00,561.00 43.00,561.00 44.00,561.00 45.00,561.00 46.00,561.00 47.00,559.56 48.00,557.35 49.00,555.14 50.00,552.92 51.00,550.71 52.00,548.50 53.00,546.29 54.00,544.08 55.00,541.87 56.00,539.66 57.00,537.45 58.00,535.24 59.00,533.03 60.00,530.82 61.00,528.62 62.00,526.41 63.00,524.20 64.00,522.00 65.00,519.80 66.00,517.59 67.00,515.39 68.00,513.19 69.00,510.99 70.00,508.80 71.00,506.60 72.00,504.40 73.00,502.21 74.00,500.02 75.00,497.83 76.00,495.64 77.00,493.45 78.00,491.26 79.00,489.08 80.00,486.90 81.00,484.72 82.00,482.54 83.00,480.36 84.00,478.19 85.00,476.01 86.00,473.84 87.00,471.67 88.00,469.51 89.00,467.34 90.00,465.18 91.00,463.02 92.00,460.86 93.00,458.71 94.00,456.56 95.00,454.41 96.00,452.26 97.00,450.12 98.00,447.98 99.00,445.84 100.00,443.70 101.00,441.57 102.00,439.44 103.00,437.31 104.00,435.19 105.00,433.07 106.00,430.95 107.00,428.83 108.00,426.72 109.00,424.62 110.00,422.51 111.00,420.41 112.00,418.31 113.00,416.22 114.00,414.13 115.00,412.04 116.00,409.96 117.00,407.88 118.00,405.80 119.00,403.73 120.00,401.66 121.00,399.60 122.00,397.54 123.00,395.48 124.00,393.43 125.00,391.38 126.00,389.34 127.00,387.30 128.00,385.27 129.00,383.23 130.00,381.21 131.00,379.19 132.00,377.17 133.00,375.16 134.00,373.15 135.00,371.14 136.00,369.15 137.00,367.15 138.00,365.16 139.00,363.18 140.00,361.20 141.00,359.22 142.00,357.25 143.00,355.29 144.00,353.33 145.00,351.37 146.00,349.42 147.00,347.48 148.00,345.54 149.00,343.61 150.00,341.68 151.00,339.76 152.00,337.84 153.00,335.93 154.00,334.02 155.00,332.12 156.00,330.23 157.00,328.34 158.00,326.45 159.00,324.57 160.00,322.70 161.00,320.84 162.00,318.98 163.00,317.12 164.00,315.27 165.00,313.43 166.00,311.60 167.00,309.77 168.00,307.94 169.00,306.13 170.00,304.31 171.00,302.51 172.00,300.71 173.00,298.92 174.00,297.13 175.00,295.35 176.00,293.58 177.00,291.82 178.00,290.06 179.00,288.31 180.00,286.56 181.00,284.82 182.00,283.09 183.00,281.36 184.00,279.64 185.00,277.93 186.00,276.23 187.00,274.53 188.00,272.84 189.00,271.16 190.00,269.48 191.00,267.81 192.00,266.15 193.00,264.50 194.00,262.85 195.00,261.21 196.00,259.58 197.00,257.95 198.00,256.34 199.00,254.73 200.00,253.12 201.00,251.53 202.00,249.94 203.00,248.36 204.00,246.79 205.00,245.23 206.00,243.67 207.00,242.12 208.00,240.58 209.00,239.05 210.00,237.53 211.00,236.01 212.00,234.50 213.00,233.00 214.00,231.51 215.00,230.02 216.00,228.55 217.00,227.08 218.00,225.62 219.00,224.17 220.00,222.73 221.00,221.29 222.00,219.86 223.00,218.45 224.00,217.04 225.00,215.64 226.00,214.24 227.00,212.86 228.00,211.49 229.00,210.12 230.00,208.76 231.00,207.41 232.00,206.07 233.00,204.74 234.00,203.42 235.00,202.10 236.00,200.80 237.00,199.50 238.00,198.21 239.00,196.93 240.00,195.66 241.00,194.40 242.00,193.15 243.00,191.91 244.00,190.68 245.00,189.45 246.00,188.24 247.00,187.03 248.00,185.84 249.00,184.65 250.00,183.47 251.00,182.30 252.00,181.14 253.00,179.99 254.00,178.85 255.00,177.72 256.00,176.60 257.00,175.49 258.00,174.39 259.00,173.29 260.00,172.21 261.00,171.14 262.00,170.07 263.00,169.02 264.00,167.97 265.00,166.94 266.00,165.91 267.00,164.89 268.00,163.89 269.00,162.89 270.00,161.91 271.00,160.93 272.00,159.96 273.00,159.01 274.00,158.06 275.00,157.12 276.00,156.20 277.00,155.28 278.00,154.37 279.00,153.48 280.00,152.59 281.00,151.71 282.00,150.85 283.00,149.99 284.00,149.14 285.00,148.31 286.00,147.48 287.00,146.67 288.00,145.86 289.00,145.06 290.00,144.28 291.00,143.50 292.00,142.74 293.00,141.99 294.00,141.24 295.00,140.51 296.00,139.79 297.00,139.07 298.00,138.37 299.00,137.68 300.00,137.00 301.00,136.33 302.00,135.67 303.00,135.02 304.00,134.38 305.00,133.75 306.00,133.13 307.00,132.52 308.00,131.93 309.00,131.34 310.00,130.76 311.00,130.20 312.00,129.64 313.00,129.10 314.00,128.57 315.00,128.04 316.00,127.53 317.00,127.03 318.00,126.54 319.00,126.06 320.00,125.59 321.00,125.13 322.00,124.69 323.00,124.25 324.00,123.82 325.00,123.41 326.00,123.00 327.00,122.61 328.00,122.23 329.00,121.85 330.00,121.49 331.00,121.14 332.00,120.80 333.00,120.47 334.00,120.16 335.00,119.85 336.00,119.55 337.00,119.27 338.00,119.00 339.00,118.73 340.00,118.48 341.00,118.24 342.00,118.01 343.00,117.79 344.00,117.58 345.00,117.38 346.00,117.20 347.00,117.02 348.00,116.86 349.00,116.70 350.00,116.56 351.00,116.43 352.00,116.31 353.00,116.20 354.00,116.10 355.00,116.01 356.00,115.93 357.00,115.87 358.00,115.81 359.00,115.77 360.00,115.73 361.00,115.71 362.00,115.70 363.00,115.70 364.00,115.71 365.00,115.73 366.00,115.77 367.00,115.81 368.00,115.87 369.00,115.93 370.00,116.01 371.00,116.10 372.00,116.20 373.00,116.31 374.00,116.43 375.00,116.56 376.00,116.70 377.00,116.86 378.00,117.02 379.00,117.20 380.00,117.38 381.00,117.58 382.00,117.79 383.00,118.01 384.00,118.24 385.00,118.48 386.00,118.73 387.00,119.00 388.00,119.27 389.00,119.55 390.00,119.85 391.00,120.16 392.00,120.47 393.00,120.80 394.00,121.14 395.00,121.49 396.00,121.85 397.00,122.23 398.00,122.61 399.00,123.00 400.00,123.41 401.00,123.82 402.00,124.25 403.00,124.69 404.00,125.13 405.00,125.59 406.00,126.06 407.00,126.54 408.00,127.03 409.00,127.53 410.00,128.04 411.00,128.57 412.00,129.10 413.00,129.64 414.00,130.20 415.00,130.76 416.00,131.34 417.00,131.93 418.00,132.52 419.00,133.13 420.00,133.75 421.00,134.38 422.00,135.02 423.00,135.67 424.00,136.33 425.00,137.00 426.00,137.68 427.00,138.37 428.00,139.07 429.00,139.79 430.00,140.51 431.00,141.24 432.00,141.99 433.00,142.74 434.00,143.50 435.00,144.28 436.00,145.06 437.00,145.86 438.00,146.67 439.00,147.48 440.00,148.31 441.00,149.14 442.00,149.99 443.00,150.85 444.00,151.71 445.00,152.59 446.00,153.48 447.00,154.37 448.00,155.28 449.00,156.20 450.00,157.12 451.00,158.06 452.00,159.01 453.00,159.96 454.00,160.93 455.00,161.91 456.00,162.89 457.00,163.89 458.00,164.89 459.00,165.91 460.00,166.94 461.00,167.97 462.00,169.02 463.00,170.07 464.00,171.14 465.00,172.21 466.00,173.29 467.00,174.39 468.00,175.49 469.00,176.60 470.00,177.72 471.00,178.85 472.00,179.99 473.00,181.14 474.00,182.30 475.00,183.47 476.00,184.65 477.00,185.84 478.00,187.03 479.00,188.24 480.00,189.45 481.00,190.68 482.00,191.91 483.00,193.15 484.00,194.40 485.00,195.66 486.00,196.93 487.00,198.21 488.00,199.50 489.00,200.80 490.00,202.10 491.00,203.42 492.00,204.74 493.00,206.07 494.00,207.41 495.00,208.76 496.00,210.12 497.00,211.49 498.00,212.86 499.00,214.24 500.00,215.64 501.00,217.04 502.00,218.45 503.00,219.86 504.00,221.29 505.00,222.73 506.00,224.17 507.00,225.62 508.00,227.08 509.00,228.55 510.00,230.02 511.00,231.51 512.00,233.00 513.00,234.50 514.00,236.01 515.00,237.53 516.00,239.05 517.00,240.58 518.00,242.12 519.00,243.67 520.00,245.23 521.00,246.79 522.00,248.36 523.00,249.94 524.00,251.53 525.00,253.12 526.00,254.73 527.00,256.34 528.00,257.95 529.00,259.58 530.00,261.21 531.00,262.85 532.00,264.50 533.00,266.15 534.00,267.81 535.00,269.48 536.00,271.16 537.00,272.84 538.00,274.53 539.00,276.23 540.00,277.93 541.00,279.64 542.00,281.36 543.00,283.09 544.00,284.82 545.00,286.56 546.00,288.31 547.00,290.06 548.00,291.82 549.00,293.58 550.00,295.35 551.00,297.13 552.00,298.92 553.00,300.71 554.00,302.51 555.00,304.31 556.00,306.13 557.00,307.94 558.00,309.77 559.00,311.60 560.00,313.43 561.00,315.27 562.00,317.12 563.00,318.98 564.00,320.84 565.00,322.70 566.00,324.57 567.00,326.45 568.00,328.34 569.00,330.23 570.00,332.12 571.00,334.02 572.00,335.93 573.00,337.84 574.00,339.76 575.00,341.68 576.00,343.61 577.00,345.54 578.00,347.48 579.00,349.42 580.00,351.37 581.00,353.33 582.00,355.29 583.00,357.25 584.00,359.22 585.00,361.20 586.00,363.18 587.00,365.16 588.00,367.15 589.00,369.15 590.00,371.14 591.00,373.15 592.00,375.16 593.00,377.17 594.00,379.19 595.00,381.21 596.00,383.23 597.00,385.27 598.00,387.30 599.00,389.34 600.00,391.38 601.00,393.43 602.00,395.48 603.00,397.54 604.00,399.60 605.00,401.66 606.00,403.73 607.00,405.80 608.00,407.88 609.00,409.96 610.00,412.04 611.00,414.13 612.00,416.22 613.00,418.31 614.00,420.41 615.00,422.51 616.00,424.62 617.00,426.72 618.00,428.83 619.00,430.95 620.00,433.07 621.00,435.19 622.00,437.31 623.00,439.44 624.00,441.57 625.00,443.70 626.00,445.84 627.00,447.98 628.00,450.12 629.00,452.26 630.00,454.41 631.00,456.56 632.00,458.71 633.00,460.86 634.00,463.02 635.00,465.18 636.00,467.34 637.00,469.51 638.00,471.67 639.00,473.84 640.00,476.01 641.00,478.19 642.00,480.36 643.00,482.54 644.00,484.72 645.00,486.90 646.00,489.08 647.00,491.26 648.00,493.45 649.00,495.64 650.00,497.83 651.00,500.02 652.00,502.21 653.00,504.40 654.00,506.60 655.00,508.80 656.00,510.99 657.00,513.19 658.00,515.39 659.00,517.59 660.00,519.80 661.00,522.00 662.00,524.20 663.00,526.41 664.00,528.62 665.00,530.82 666.00,533.03 667.00,535.24 668.00,537.45 669.00,539.66 670.00,541.87 671.00,544.08 672.00,546.29 673.00,548.50 674.00,550.71 675.00,552.92 676.00,555.14 677.00,557.35 678.00,559.56 679.00,561.77 680.00,563.99 681.00,566.20 682.00,568.41 683.00,570.62 684.00,572.84 685.00,575.05 686.00,577.26 687.00,579.47 688.00,581.68 689.00,583.89 690.00,586.10 691.00,588.31 692.00,590.51 693.00,592.72 694.00,594.93 695.00,597.13 696.00,599.34 697.00,601.54 698.00,603.75 699.00,605.95 700.00,608.15 701.00,610.35 702.00,612.55 703.00,614.74 704.00,616.94 705.00,619.13 706.00,621.33 707.00,623.52 708.00,625.71 709.00,627.89 710.00,630.08 711.00,632.27 712.00,634.45 713.00,636.63 714.00,638.81 715.00,640.99 716.00,643.16 717.00,645.34 718.00,647.51 719.00,649.68 720.00,651.84 721.00,654.01 722.00,656.17 723.00,658.33 724.00,660.49 725.00,662.64 726.00,664.80 727.00,666.95 728.00,669.10 729.00,671.24 730.00,673.38 731.00,675.52 732.00,677.66 733.00,679.79 734.00,681.92 735.00,684.05 736.00,686.18 737.00,688.30 738.00,690.42 739.00,692.53 740.00,694.64 741.00,696.75 742.00,698.86 743.00,700.96 744.00,703.06 745.00,705.15 746.00,707.25 747.00,709.33 748.00,711.42 749.00,713.50 750.00,715.57 751.00,717.65 752.00,719.72 753.00,721.78 754.00,723.84 755.00,725.90 756.00,727.95 757.00,730.00 758.00,732.05 759.00,734.09 760.00,736.12 761.00,738.16 762.00,740.18 763.00,742.21 764.00,744.23 765.00,746.24 766.00,748.25 767.00,750.26 768.00,752.26 769.00,754.25 770.00,756.24 771.00,758.23 772.00,760.21 773.00,762.19 774.00,764.16 775.00,766.12 776.00,768.08 777.00,770.04 778.00,771.99 779.00,773.94 780.00,775.88 781.00,777.81 782.00,779.74 783.00,781.67 784.00,783.59 785.00,785.50 786.00,787.41 787.00,789.31 788.00,791.21 789.00,793.10 790.00,794.98 791.00,796.86 792.00,798.74 793.00,800.60 794.00,802.47 795.00,804.32 796.00,806.17 797.00,808.02 798.00,809.85 799.00,811.69 800.00,813.51 801.00,815.33 802.00,817.14 803.00,818.95 804.00,820.75 805.00,822.54 806.00,824.33 807.00,826.11 808.00,827.89 809.00,829.65 810.00,831.42 811.00,833.17 812.00,834.92 813.00,836.66 814.00,838.39 815.00,840.12 816.00,841.84 817.00,843.55 818.00,845.26 819.00,846.96 820.00,848.65 821.00,850.34 822.00,852.02 823.00,853.69 824.00,855.35 825.00,857.01 826.00,858.66 827.00,860.30 828.00,861.93 829.00,863.56 830.00,865.18 831.00,866.79 832.00,868.40 833.00,869.99 834.00,871.58 835.00,873.16 836.00,874.74 837.00,876.30 838.00,877.86 839.00,879.41 840.00,880.96 841.00,882.49 842.00,884.02 843.00,885.54 844.00,887.05 845.00,888.55 846.00,890.05 847.00,891.53 848.00,893.01 849.00,894.48 850.00,895.94 851.00,897.40 852.00,898.84 853.00,900.28 854.00,901.71 855.00,903.13 856.00,904.54 857.00,905.94 858.00,907.34 859.00,908.73 860.00,910.10 861.00,911.47 862.00,912.83 863.00,914.18 864.00,915.53 865.00,916.86 866.00,918.19 867.00,919.50 868.00,920.81 869.00,922.11 870.00,923.40 871.00,924.68 872.00,925.96 873.00,927.22 874.00,928.47 875.00,929.72 876.00,930.95 877.00,932.18 878.00,933.40 879.00,934.61 880.00,935.81 881.00,937.00 882.00,938.18 883.00,939.35 884.00,940.51 885.00,941.66 886.00,942.81 887.00,943.94 888.00,945.06 889.00,946.18 890.00,947.28 891.00,948.38 892.00,949.47 893.00,950.54 894.00,951.61 895.00,952.67 896.00,953.72 897.00,954.75 898.00,955.78 899.00,956.80 900.00,957.81 901.00,958.81 902.00,959.80 903.00,960.78 904.00,961.75 905.00,962.71 906.00,963.66 907.00,964.60 908.00,965.53 909.00,966.45 910.00,967.36 911.00,968.26 912.00,969.15 913.00,970.03 914.00,970.90 915.00,971.76 916.00,972.60 917.00,973.44 918.00,974.27 919.00,975.09 920.00,975.90 921.00,976.70 922.00,977.49 923.00,978.26 924.00,979.03 925.00,979.79 926.00,980.54 927.00,981.27 928.00,982.00 929.00,982.71 930.00,983.42 931.00,984.11 932.00,984.80 933.00,985.47 934.00,986.14 935.00,986.79 936.00,987.43 937.00,988.06 938.00,988.68 939.00,989.30 940.00,989.90 941.00,990.49 942.00,991.06 943.00,991.63 944.00,992.19 945.00,992.74 946.00,993.27 947.00,993.80 948.00,994.32 949.00,994.82 950.00,995.31 951.00,995.80 952.00,996.27 953.00,996.73 954.00,997.18 955.00,997.62 956.00,998.05 957.00,998.47 958.00,998.88 959.00,999.27 960.00,999.66 961.00,1000.04 962.00,1000.40 963.00,1000.75 964.00,1001.10 965.00,1001.43 966.00,1001.75 967.00,1002.06 968.00,1002.36 969.00,1002.65 970.00,1002.92 971.00,1003.19 972.00,1003.45 973.00,1003.69 974.00,1003.92 975.00,1004.15 976.00,1004.36 977.00,1004.56 978.00,1004.75 979.00,1004.93 980.00,1005.10 981.00,1005.25 982.00,1005.40 983.00,1005.53 984.00,1005.66 985.00,1005.77 986.00,1005.87 987.00,1005.97 988.00,1006.05 989.00,1006.12 990.00,1006.17 991.00,1006.22 992.00,1006.26 993.00,1006.28 994.00,1006.30 995.00,1006.30 996.00,1006.29 997.00,1006.27 998.00,1006.24 999.00,1006.20 1000.00,1006.15 1001.00,1006.09 1002.00,1006.02 1003.00,1005.93 1004.00,1005.83 1005.00,1005.73 1006.00,1005.61 1007.00,1005.48 1008.00,1005.34 1009.00,1005.19 1010.00,1005.03 1011.00,1004.86 1012.00,1004.67 1013.00,1004.48 1014.00,1004.28 1015.00,1004.06 1016.00,1003.83 1017.00,1003.59 1018.00,1003.34 1019.00,1003.08 1020.00,1002.81 1021.00,1002.53 1022.00,1002.24 1023.00,1001.94 1024.00,1001.62 1025.00,1001.30 1026.00,1000.96 1027.00,1000.61 1028.00,1000.26 1029.00,999.89 1030.00,999.51 1031.00,999.12 1032.00,998.72 1033.00,998.30 1034.00,997.88 1035.00,997.45 1036.00,997.00 1037.00,996.55 1038.00,996.08 1039.00,995.61 1040.00,995.12 1041.00,994.62 1042.00,994.11 1043.00,993.59 1044.00,993.06 1045.00,992.52 1046.00,991.97 1047.00,991.41 1048.00,990.83 1049.00,990.25 1050.00,989.66 1051.00,989.05 1052.00,988.44 1053.00,987.81 1054.00,987.18 1055.00,986.53 1056.00,985.87 1057.00,985.20 1058.00,984.53 1059.00,983.84 1060.00,983.14 1061.00,982.43 1062.00,981.71 1063.00,980.98 1064.00,980.24 1065.00,979.49 1066.00,978.73 1067.00,977.95 1068.00,977.17 1069.00,976.38 1070.00,975.58 1071.00,974.77 1072.00,973.94 1073.00,973.11 1074.00,972.27 1075.00,971.41 1076.00,970.55 1077.00,969.68 1078.00,968.79 1079.00,967.90 1080.00,966.99 1081.00,966.08 1082.00,965.16 1083.00,964.22 1084.00,963.28 1085.00,962.32 1086.00,961.36 1087.00,960.39 1088.00,959.40 1089.00,958.41 1090.00,957.41 1091.00,956.40 1092.00,955.37 1093.00,954.34 1094.00,953.30 1095.00,952.25 1096.00,951.19 1097.00,950.11 1098.00,949.03 1099.00,947.94 1100.00,946.84 1101.00,945.73 1102.00,944.62 1103.00,943.49 1104.00,942.35 1105.00,941.20 1106.00,940.05 1107.00,938.88 1108.00,937.71 1109.00,936.52 1110.00,935.33 1111.00,934.12 1112.00,932.91 1113.00,931.69 1114.00,930.46 1115.00,929.22 1116.00,927.97 1117.00,926.71 1118.00,925.45 1119.00,924.17 1120.00,922.89 1121.00,921.59 1122.00,920.29 1123.00,918.98 1124.00,917.66 1125.00,916.33 1126.00,914.99 1127.00,913.65 1128.00,912.29 1129.00,910.93 1130.00,909.55 1131.00,908.17 1132.00,906.78 1133.00,905.38 1134.00,903.98 1135.00,902.56 1136.00,901.14 1137.00,899.71 1138.00,898.27 1139.00,896.82 1140.00,895.36 1141.00,893.89 1142.00,892.42 1143.00,890.94 1144.00,889.45 1145.00,887.95 1146.00,886.44 1147.00,884.93 1148.00,883.41 1149.00,881.88 1150.00,880.34 1151.00,878.79 1152.00,877.24 1153.00,875.68 1154.00,874.11 1155.00,872.53 1156.00,870.95 1157.00,869.36 1158.00,867.76 1159.00,866.15 1160.00,864.53 1161.00,862.91 1162.00,861.28 1163.00,859.64 1164.00,858.00 1165.00,856.35 1166.00,854.69 1167.00,853.02 1168.00,851.35 1169.00,849.66 1170.00,847.98 1171.00,846.28 1172.00,844.58 1173.00,842.87 1174.00,841.15 1175.00,839.43 1176.00,837.70 1177.00,835.96 1178.00,834.22 1179.00,832.47 1180.00,830.71 1181.00,828.95 1182.00,827.18 1183.00,825.40 1184.00,823.62 1185.00,821.83 1186.00,820.03 1187.00,818.23 1188.00,816.42 1189.00,814.60 1190.00,812.78 1191.00,810.95 1192.00,809.12 1193.00,807.28 1194.00,805.43 1195.00,803.58 1196.00,801.72 1197.00,799.86 1198.00,797.99 1199.00,796.11 1200.00,794.23 1201.00,792.34 1202.00,790.45 1203.00,788.55 1204.00,786.65 1205.00,784.73 1206.00,782.82 1207.00,780.90 1208.00,778.97 1209.00,777.04 1210.00,775.10 1211.00,773.16 1212.00,771.21 1213.00,769.26 1214.00,767.30 1215.00,765.34 1216.00,763.37 1217.00,761.40 1218.00,759.42 1219.00,757.43 1220.00,755.45 1221.00,753.45 1222.00,751.46 1223.00,749.45 1224.00,747.45 1225.00,745.44 1226.00,743.42 1227.00,741.40 1228.00,739.37 1229.00,737.34 1230.00,735.31 1231.00,733.27 1232.00,731.23 1233.00,729.18 1234.00,727.13 1235.00,725.08 1236.00,723.02 1237.00,720.96 1238.00,718.89 1239.00,716.82 1240.00,714.74 1241.00,712.67 1242.00,710.58 1243.00,708.50 1244.00,706.41 1245.00,704.32 1246.00,702.22 1247.00,700.12 1248.00,698.02 1249.00,695.91 1250.00,693.80 1251.00,691.69 1252.00,689.57 1253.00,687.45 1254.00,685.33 1255.00,683.20 1256.00,681.07 1257.00,678.94 1258.00,676.80 1259.00,674.67 1260.00,672.53 1261.00,670.38 1262.00,668.24 1263.00,666.09 1264.00,663.94 1265.00,661.78 1266.00,659.63 1267.00,657.47 1268.00,655.31 1269.00,653.14 1270.00,650.98 1271.00,648.81 1272.00,646.64 1273.00,644.47 1274.00,642.29 1275.00,640.12 1276.00,637.94 1277.00,635.76 1278.00,633.58 1279.00,631.39 1280.00,629.21 1281.00,627.02 1282.00,624.83 1283.00,622.64 1284.00,620.45 1285.00,618.25 1286.00,616.06 1287.00,613.86 1288.00,611.67 1289.00,609.47 1290.00,607.27 1291.00,605.07 1292.00,602.86 1293.00,600.66 1294.00,598.46 1295.00,596.25 1296.00,594.05 1297.00,591.84 1298.00,589.63 1299.00,587.42 1300.00,585.21 1301.00,583.01 1302.00,580.80 1303.00,578.58 1304.00,576.37 1305.00,574.16 1306.00,571.95 1307.00,569.74 1308.00,567.53 1309.00,565.31 1310.00,563.10 1311.00,560.89 1312.00,558.68 1313.00,556.46 1314.00,554.25 1315.00,552.04 1316.00,549.83 1317.00,547.62 1318.00,545.41 1319.00,543.19 1320.00,540.98 1321.00,538.77 1322.00,536.56 1323.00,534.36 1324.00,532.15 1325.00,529.94 1326.00,527.73 1327.00,525.53 1328.00,523.32 1329.00,521.12 1330.00,518.92 1331.00,516.71 1332.00,514.51 1333.00,512.31 1334.00,510.11 1335.00,507.92 1336.00,505.72 1337.00,503.53 1338.00,501.33 1339.00,499.14 1340.00,496.95 1341.00,494.76 1342.00,492.57 1343.00,490.39 1344.00,488.21 1345.00,486.02 1346.00,483.84 1347.00,481.67 1348.00,479.49 1349.00,477.32 1350.00,475.14 1351.00,472.97 1352.00,470.81 1353.00,468.64 1354.00,466.48 1355.00,464.32 1356.00,462.16 1357.00,460.00 1358.00,457.85 1359.00,455.70 1360.00,453.55 1361.00,451.40 1362.00,449.26 1363.00,447.12 1364.00,444.98 1365.00,442.85 1366.00,440.72 1367.00,438.59 1368.00,436.46 1369.00,434.34 1370.00,432.22 1371.00,430.10 1372.00,427.99 1373.00,425.88 1374.00,423.77 1375.00,421.67 1376.00,419.57 1377.00,417.47 1378.00,415.38 1379.00,413.29 1380.00,411.21 1381.00,409.13 1382.00,407.05 1383.00,404.97 1384.00,402.90 1385.00,400.84 1386.00,398.77 1387.00,396.72 1388.00,394.66 1389.00,392.61 1390.00,390.57 1391.00,388.52 1392.00,386.49 1393.00,384.45 1394.00,382.42 1395.00,380.40 1396.00,378.38 1397.00,376.36 1398.00,374.35 1399.00,372.35 1400.00,370.34 1401.00,368.35 1402.00,366.35 1403.00,364.37 1404.00,362.38 1405.00,360.41 1406.00,358.43 1407.00,356.47 1408.00,354.50 1409.00,352.55 1410.00,350.59 1411.00,348.65 1412.00,346.70 1413.00,344.77 1414.00,342.84 1415.00,340.91 1416.00,338.99 1417.00,337.07 1418.00,335.16 1419.00,333.26 1420.00,331.36 1421.00,329.47 1422.00,327.58 1423.00,325.70 1424.00,323.83 1425.00,321.96 1426.00,320.09 1427.00,318.23 1428.00,316.38 1429.00,314.54 1430.00,312.70 1431.00,310.86 1432.00,309.04 1433.00,307.22 1434.00,305.40 1435.00,303.59 1436.00,301.79 1437.00,299.99 1438.00,298.20 1439.00,296.42 1440.00,294.65 1441.00,292.88 1442.00,291.11 1443.00,289.36 1444.00,287.61 1445.00,285.86 1446.00,284.13 1447.00,282.40 1448.00,280.67 1449.00,278.96 1450.00,277.25 1451.00,275.55 1452.00,273.85 1453.00,272.17 1454.00,270.49 1455.00,268.81 1456.00,267.15 1457.00,265.49 1458.00,263.84 1459.00,262.19 1460.00,260.56 1461.00,258.93 1462.00,257.31 1463.00,255.69 1464.00,254.08 1465.00,252.48 1466.00,250.89 1467.00,249.31 1468.00,247.73 1469.00,246.16 1470.00,244.60 1471.00,243.05 1472.00,241.51 1473.00,239.97 1474.00,238.44 1475.00,236.92 1476.00,235.40 1477.00,233.90 1478.00,232.40 1479.00,230.91 1480.00,229.43 1481.00,227.96 1482.00,226.49 1483.00,225.04 1484.00,223.59 1485.00,222.15 1486.00,220.72 1487.00,219.30 1488.00,217.88 1489.00,216.48 1490.00,215.08 1491.00,213.69 1492.00,212.31 1493.00,210.94 1494.00,209.57 1495.00,208.22 1496.00,206.87 1497.00,205.54 1498.00,204.21 1499.00,202.89 1500.00,201.58 1501.00,200.28 1502.00,198.98 1503.00,197.70 1504.00,196.43 1505.00,195.16 1506.00,193.90 1507.00,192.66 1508.00,191.42 1509.00,190.19 1510.00,188.97 1511.00,187.76 1512.00,186.55 1513.00,185.36 1514.00,184.18 1515.00,183.00 1516.00,181.84 1517.00,180.68 1518.00,179.54 1519.00,178.40 1520.00,177.27 1521.00,176.15 1522.00,175.05 1523.00,173.95 1524.00,172.86 1525.00,171.78 1526.00,170.71 1527.00,169.65 1528.00,168.60 1529.00,167.56 1530.00,166.52 1531.00,165.50 1532.00,164.49 1533.00,163.49 1534.00,162.50 1535.00,161.51 1536.00,160.54 1537.00,159.58 1538.00,158.63 1539.00,157.68 1540.00,156.75 1541.00,155.83 1542.00,154.92 1543.00,154.01 1544.00,153.12 1545.00,152.24 1546.00,151.36 1547.00,150.50 1548.00,149.65 1549.00,148.81 1550.00,147.98 1551.00,147.15 1552.00,146.34 1553.00,145.54 1554.00,144.75 1555.00,143.97 1556.00,143.20 1557.00,142.44 1558.00,141.69 1559.00,140.95 1560.00,140.22 1561.00,139.50 1562.00,138.79 1563.00,138.09 1564.00,137.41 1565.00,136.73 1566.00,136.06 1567.00,135.41 1568.00,134.76 1569.00,134.13 1570.00,133.50 1571.00,132.89 1572.00,132.28 1573.00,131.69 1574.00,131.11 1575.00,130.54 1576.00,129.98 1577.00,129.42 1578.00,128.89 1579.00,128.36 1580.00,127.84 1581.00,127.33 1582.00,126.83 1583.00,126.35 1584.00,125.87 1585.00,125.41 1586.00,124.95 1587.00,124.51 1588.00,124.08 1589.00,123.65 1590.00,123.24 1591.00,122.84 1592.00,122.45 1593.00,122.08 1594.00,121.71 1595.00,121.35 1596.00,121.01 1597.00,120.67 1598.00,120.35 1599.00,120.03 1600.00,119.73 1601.00,119.44 1602.00,119.16 1603.00,118.89 1604.00,118.63 1605.00,118.38 1606.00,118.14 1607.00,117.92 1608.00,117.70 1609.00,117.50 1610.00,117.31 1611.00,117.12 1612.00,116.95 1613.00,116.79 1614.00,116.64 1615.00,116.50 1616.00,116.38 1617.00,116.26 1618.00,116.16 1619.00,116.06 1620.00,115.98 1621.00,115.90 1622.00,115.84 1623.00,115.79 1624.00,115.75 1625.00,115.72 1626.00,115.71 1627.00,115.70 1628.00,115.70 1629.00,115.72 1630.00,115.75 1631.00,115.78 1632.00,115.83 1633.00,115.89 1634.00,115.96 1635.00,116.04 1636.00,116.14 1637.00,116.24 1638.00,116.35 1639.00,116.48 1640.00,116.61 1641.00,116.76 1642.00,116.92 1643.00,117.09 1644.00,117.27 1645.00,117.46 1646.00,117.66 1647.00,117.87 1648.00,118.10 1649.00,118.33 1650.00,118.58 1651.00,118.84 1652.00,119.10 1653.00,119.38 1654.00,119.67 1655.00,119.97 1656.00,120.28 1657.00,120.60 1658.00,120.94 1659.00,121.28 1660.00,121.64 1661.00,122.00 1662.00,122.38 1663.00,122.77 1664.00,123.16 1665.00,123.57 1666.00,123.99 1667.00,124.42 1668.00,124.86 1669.00,125.31 1670.00,125.78 1671.00,126.25 1672.00,126.73 1673.00,127.23 1674.00,127.74 1675.00,128.25 1676.00,128.78 1677.00,129.32 1678.00,129.86 1679.00,130.42 1680.00,130.99 1681.00,131.57 1682.00,132.16 1683.00,132.76 1684.00,133.38 1685.00,134.00 1686.00,134.63 1687.00,135.28 1688.00,135.93 1689.00,136.59 1690.00,137.27 1691.00,137.95 1692.00,138.65 1693.00,139.36 1694.00,140.07 1695.00,140.80 1696.00,141.54 1697.00,142.29 1698.00,143.04 1699.00,143.81 1700.00,144.59 1701.00,145.38 1702.00,146.18 1703.00,146.99 1704.00,147.81 1705.00,148.64 1706.00,149.48 1707.00,150.33 1708.00,151.19 1709.00,152.06 1710.00,152.94 1711.00,153.83 1712.00,154.73 1713.00,155.64 1714.00,156.57 1715.00,157.50 1716.00,158.44 1717.00,159.39 1718.00,160.35 1719.00,161.32 1720.00,162.30 1721.00,163.29 1722.00,164.29 1723.00,165.30 1724.00,166.32 1725.00,167.35 1726.00,168.39 1727.00,169.44 1728.00,170.50 1729.00,171.56 1730.00,172.64 1731.00,173.73 1732.00,174.83 1733.00,175.93 1734.00,177.05 1735.00,178.17 1736.00,179.31 1737.00,180.45 1738.00,181.61 1739.00,182.77 1740.00,183.94 1741.00,185.12 1742.00,186.31 1743.00,187.51 1744.00,188.72 1745.00,189.94 1746.00,191.17 1747.00,192.41 1748.00,193.65 1749.00,194.91 1750.00,196.17 1751.00,197.44 1752.00,198.73 1753.00,200.02 1754.00,201.32 1755.00,202.63 1756.00,203.94 1757.00,205.27 1758.00,206.61 1759.00,207.95 1760.00,209.30 1761.00,210.66 1762.00,212.03 1763.00,213.41 1764.00,214.80 1765.00,216.20 1766.00,217.60 1767.00,219.01 1768.00,220.43 1769.00,221.86 1770.00,223.30 1771.00,224.75 1772.00,226.20 1773.00,227.67 1774.00,229.14 1775.00,230.62 1776.00,232.10 1777.00,233.60 1778.00,235.10 1779.00,236.61 1780.00,238.13 1781.00,239.66 1782.00,241.20 1783.00,242.74 1784.00,244.29 1785.00,245.85 1786.00,247.42 1787.00,248.99 1788.00,250.58 1789.00,252.17 1790.00,253.76 1791.00,255.37 1792.00,256.98 1793.00,258.60 1794.00,260.23 1795.00,261.87 1796.00,263.51 1797.00,265.16 1798.00,266.82 1799.00,268.48 1800.00,270.15 1801.00,271.83 1802.00,273.52 1803.00,275.21 1804.00,276.91 1805.00,278.62 1806.00,280.33 1807.00,282.05 1808.00,283.78 1809.00,285.52 1810.00,287.26 1811.00,289.01 1812.00,290.76 1813.00,292.52 1814.00,294.29 1815.00,296.07 1816.00,297.85 1817.00,299.64 1818.00,301.43 1819.00,303.23 1820.00,305.04 1821.00,306.85 1822.00,308.67 1823.00,310.50 1824.00,312.33 1825.00,314.17 1826.00,316.01 1827.00,317.86 1828.00,319.72 1829.00,321.58 1830.00,323.45 1831.00,325.33 1832.00,327.21 1833.00,329.09 1834.00,330.98 1835.00,332.88 1836.00,334.78 1837.00,336.69 1838.00,338.61 1839.00,340.53 1840.00,342.45 1841.00,344.38 1842.00,346.32 1843.00,348.26 1844.00,350.20 1845.00,352.15 1846.00,354.11 1847.00,356.07 1848.00,358.04 1849.00,360.01 1850.00,361.99 1851.00,363.97 1852.00,365.96 1853.00,367.95 1854.00,369.94 1855.00,371.95 1856.00,373.95 1857.00,375.96 1858.00,377.98 1859.00,379.99 1860.00,382.02 1861.00,384.05 1862.00,386.08 1863.00,388.12 1864.00,390.16 1865.00,392.20 1866.00,394.25 1867.00,396.31 1868.00,398.36 1869.00,400.42 1870.00,402.49 1871.00,404.56 1872.00,406.63 1873.00,408.71 1874.00,410.79 1875.00,412.88 1876.00,414.96 1877.00,417.06 1878.00,419.15 1879.00,421.25 1880.00,423.35 1881.00,425.46 1882.00,427.57 1883.00,429.68 1884.00,431.80 1885.00,433.91 1886.00,436.04 1887.00,438.16 1888.00,440.29 1889.00,442.42 1890.00,444.56 1891.00,446.69 1892.00,448.83 1893.00,450.97 1894.00,453.12 1895.00,455.27 1896.00,457.42 1897.00,459.57 1898.00,461.73 1899.00,463.88 1900.00,466.04 1901.00,468.21 1902.00,470.37 1903.00,472.54 1904.00,474.71" fill="none" stroke="#50e650" stroke-width="1.25" stroke-linejoin="round"/></svg></body></html>
